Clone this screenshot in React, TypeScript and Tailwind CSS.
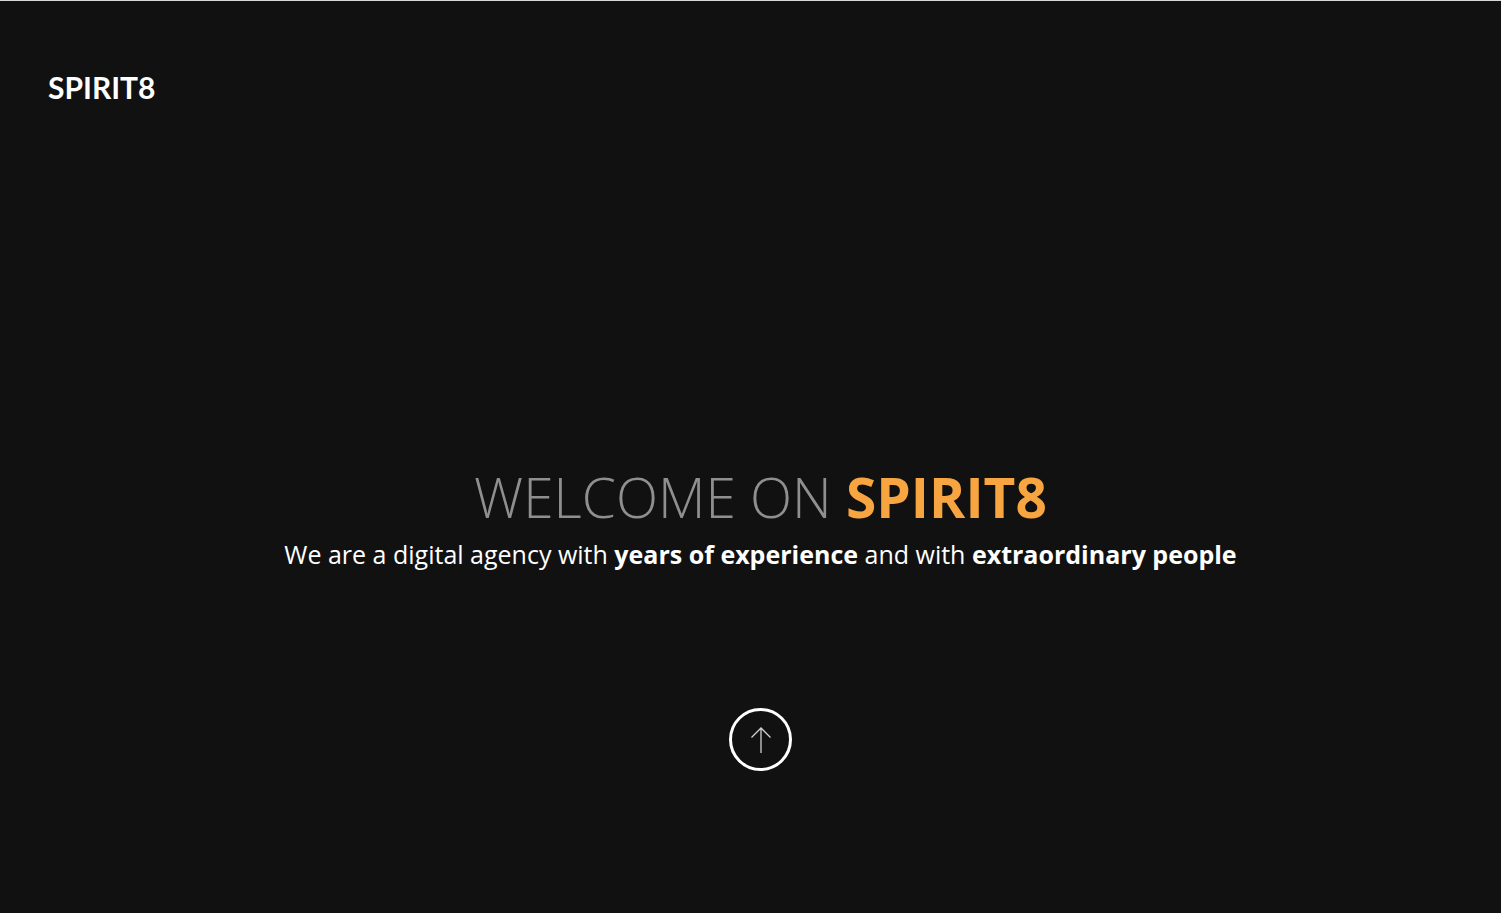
export default function App() {
  return (
    <section className="h-[913px] bg-[#111111] border-t border-[#d9d9d9] flex flex-col text-white">
      <header className="px-12 pt-[68px]">
        <h1 className="font-['Lato',sans-serif] font-bold text-[30px] leading-9">
          SPIRIT8
        </h1>
      </header>

      <div className="flex flex-col items-center pl-5 mt-[360px] font-['Open_Sans',sans-serif]">
        <h2 className="text-[55px] leading-[64px] font-light text-[#8f8f8f]">
          WELCOME ON <span className="font-bold text-[#f7a541]">SPIRIT8</span>
        </h2>
        <p className="text-[25px] leading-8 mt-[9px]">
          We are a digital agency with <strong className="font-bold">years of experience</strong> and
          with <strong className="font-bold">extraordinary people</strong>
        </p>
        <a
          href="#"
          className="mt-[138px] w-[63px] h-[63px] rounded-full border-[3px] border-white flex items-center justify-center"
        >
          <svg width="22" height="28" viewBox="0 0 22 28" fill="none" stroke="#d0d0d0" strokeWidth="1.3">
            <path d="M11 27V2M1.5 11.5L11 2l9.5 9.5" />
          </svg>
        </a>
      </div>
    </section>
  );
}
